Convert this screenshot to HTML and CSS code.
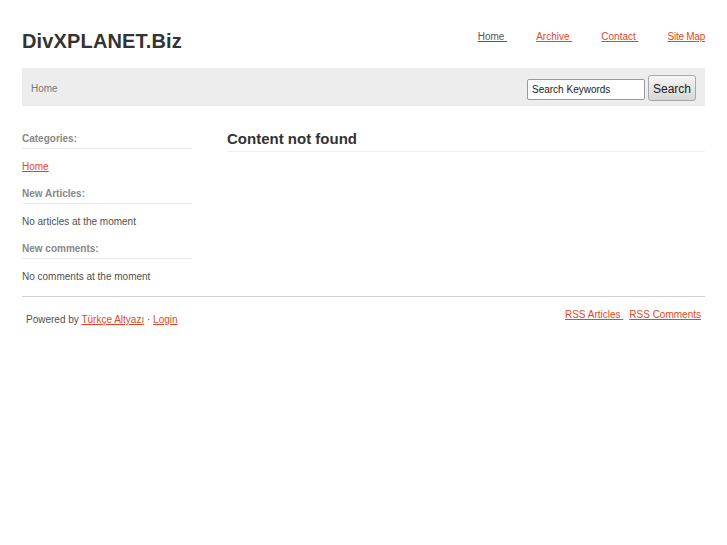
FILE: index.html
```html
<!DOCTYPE html>
<html>
<head>
<meta charset="utf-8">
<title>DivXPLANET.Biz</title>
<link rel="stylesheet" href="styles.css">
</head>
<body>
<div class="wrap">
  <header class="header">
    <h1 class="logo">DivXPLANET.Biz</h1>
    <nav class="nav"><a class="nav-link current" href="#">Home </a><a class="nav-link" href="#">Archive </a><a class="nav-link" href="#">Contact </a><a class="nav-link last" href="#">Site Map</a></nav>
  </header>
  <div class="bar">
    <span class="crumb">Home</span>
    <form class="search">
      <input class="search-input" type="text" value="Search Keywords">
      <button class="search-btn" type="button">Search</button>
    </form>
  </div>
  <div class="content">
    <aside class="sidebar">
      <h3 class="side-title">Categories:</h3>
      <p class="side-item"><a href="#">Home </a></p>
      <h3 class="side-title">New Articles:</h3>
      <p class="side-item">No articles at the moment</p>
      <h3 class="side-title">New comments:</h3>
      <p class="side-item">No comments at the moment</p>
    </aside>
    <main class="main">
      <h2 class="main-title">Content not found</h2>
    </main>
  </div>
  <footer class="footer">
    <p class="powered">Powered by <a href="#">Türkçe Altyazı</a> · <a href="#">Login</a></p>
    <p class="rss"><a href="#">RSS Articles </a> <a href="#">RSS Comments </a></p>
  </footer>
</div>
</body>
</html>
```

FILE: styles.css
```css
html, body {
  margin: 0;
  padding: 0;
  background: #fff;
}
body {
  font-family: "Liberation Sans", Arial, sans-serif;
  font-size: 10px;
  line-height: 12px;
  color: #505050;
}
a {
  color: #e5461f;
  text-decoration: underline;
}
.wrap {
  width: 683px;
  margin: 0 auto;
}
.header {
  display: flex;
  justify-content: space-between;
  align-items: flex-start;
  padding: 30px 0 16px;
}
.logo {
  margin: 0;
  font-size: 20px;
  line-height: 22px;
  letter-spacing: 0.15px;
  font-weight: bold;
  color: #333;
}
.nav {
  margin-top: 1px;
}
.nav-link {
  margin-left: 29px;
  font-size: 10px;
  line-height: 12px;
}
.nav-link.last {
  letter-spacing: -0.25px;
}
.nav-link.current {
  color: #555;
}
.bar {
  display: flex;
  align-items: center;
  justify-content: space-between;
  height: 38px;
  background: #ededed;
  padding: 0 9px;
}
.crumb {
  color: #777;
  margin-top: 3px;
}
.search {
  display: flex;
  align-items: center;
  gap: 3px;
  margin: 2px 0 0;
}
.search-input {
  box-sizing: border-box;
  width: 118px;
  height: 21px;
  margin: 3px 0 0;
  padding: 0 4px;
  border: 1px solid #999;
  border-radius: 2px;
  background: #fff;
  font-family: "Liberation Sans", Arial, sans-serif;
  font-size: 10px;
  color: #222;
}
.search-btn {
  box-sizing: border-box;
  width: 48px;
  height: 26px;
  margin: 0;
  padding: 1px 0 0;
  border: 1px solid #a8a8a8;
  border-radius: 3px;
  background: linear-gradient(#f5f5f5, #d6d6d6);
  font-family: "Liberation Sans", Arial, sans-serif;
  font-size: 12px;
  color: #222;
}
.content {
  display: flex;
  gap: 35px;
}
.sidebar {
  width: 170px;
  flex: none;
  padding-top: 26px;
}
.side-title {
  margin: 0;
  padding: 1px 0 3px;
  border-bottom: 1px solid #eeeaea;
  font-size: 10px;
  line-height: 12px;
  font-weight: bold;
  color: #888;
}
.side-item {
  margin: 12px 0 14px;
}
.main {
  flex: 1;
  padding-top: 24px;
}
.main-title {
  margin: 0;
  padding-bottom: 3px;
  border-bottom: 1px solid #f3eded;
  font-size: 15px;
  line-height: 18px;
  font-weight: bold;
  color: #333;
}
.footer {
  display: flex;
  justify-content: space-between;
  align-items: flex-start;
  border-top: 1px solid #d0d0d0;
  margin-top: -1px;
  padding: 12px 4px 0;
}
.powered {
  margin: 5px 0 0;
}
.rss {
  margin: 0;
}
.rss a {
  margin-left: 6px;
}
```
